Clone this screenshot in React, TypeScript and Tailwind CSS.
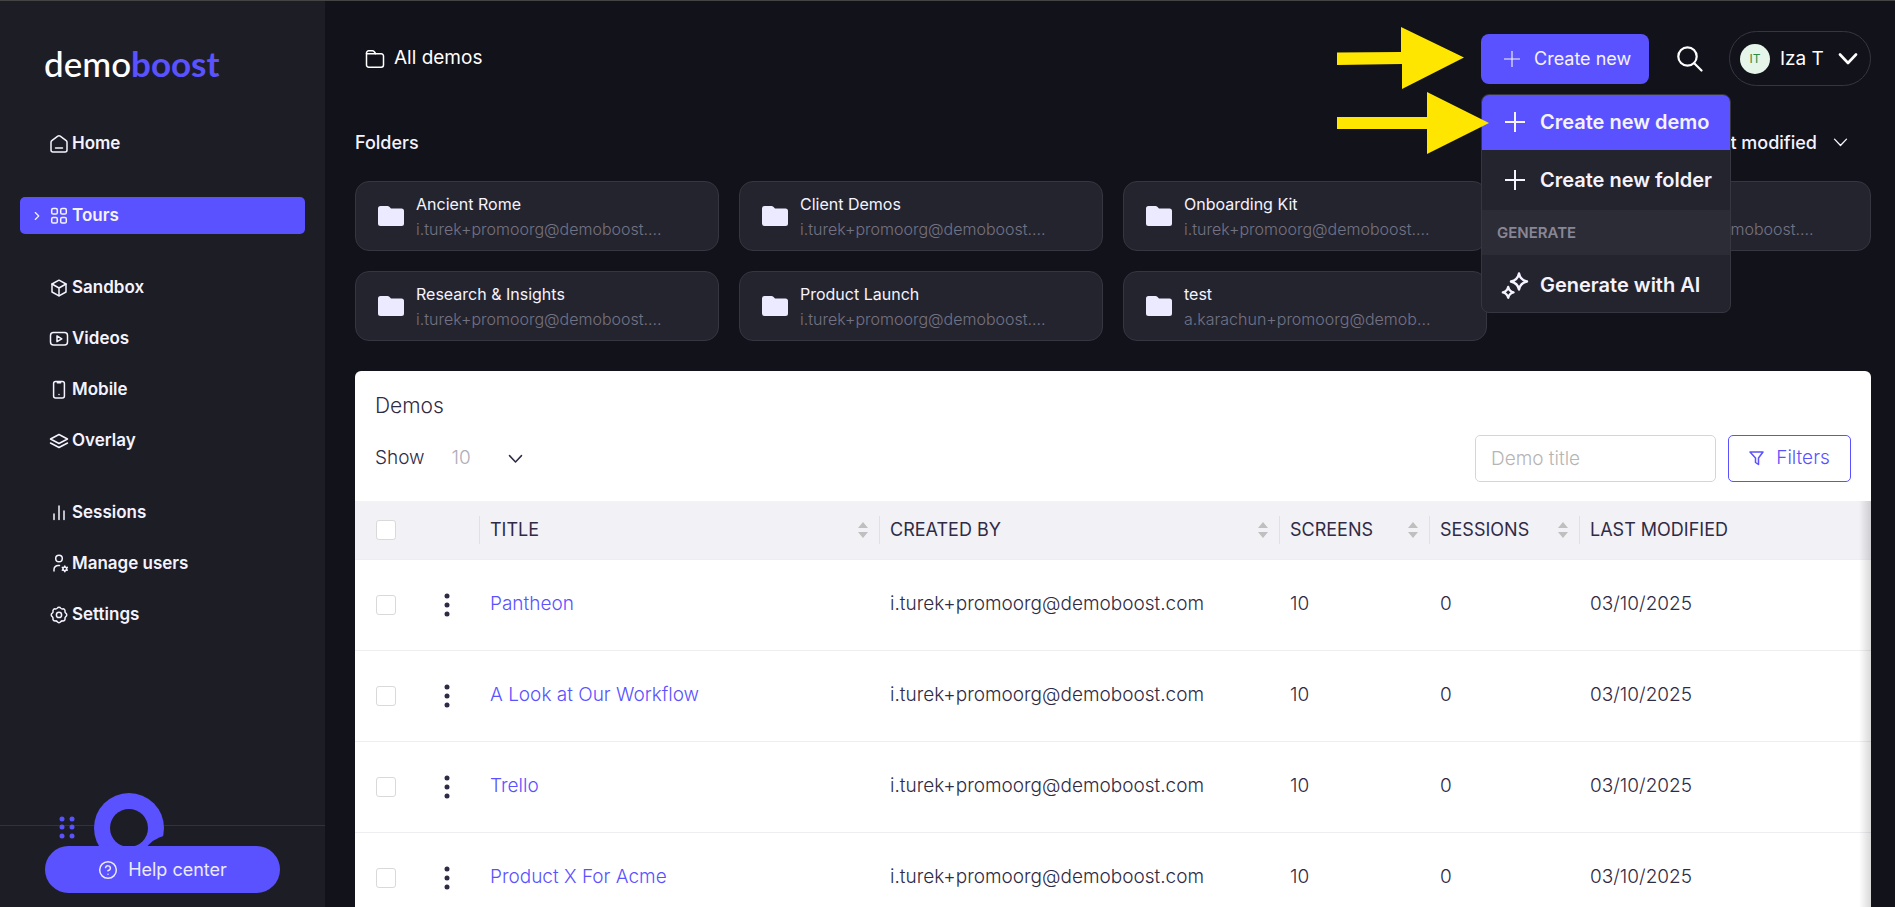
import type { ReactNode } from 'react'
import { ChevronRight, CircleHelp } from 'lucide-react'

type NavItem = {
  label: string
  icon: ReactNode
  active?: boolean
}

function Icon({ children, className = 'size-5' }: { children: ReactNode; className?: string }) {
  return (
    <svg
      viewBox="0 0 20 20"
      fill="none"
      stroke="currentColor"
      strokeWidth="1.5"
      strokeLinecap="round"
      strokeLinejoin="round"
      className={`shrink-0 ${className}`}
      aria-hidden="true"
    >
      {children}
    </svg>
  )
}

function PlusIcon({ className, strokeWidth }: { className: string; strokeWidth: number }) {
  return (
    <svg viewBox="0 0 20 20" fill="none" stroke="currentColor" strokeWidth={strokeWidth} className={`shrink-0 ${className}`} aria-hidden="true">
      <path d="M10 0v20M0 10h20" />
    </svg>
  )
}

function Chevron({ className, strokeWidth }: { className: string; strokeWidth: number }) {
  return (
    <svg
      viewBox="0 0 20 12"
      fill="none"
      stroke="currentColor"
      strokeWidth={strokeWidth}
      strokeLinecap="round"
      strokeLinejoin="round"
      className={`shrink-0 ${className}`}
      aria-hidden="true"
    >
      <path d="M2 1.5l8 8.500 8-8.500" />
    </svg>
  )
}

const navGroups: NavItem[][] = [
  [
    {
      label: 'Home',
      icon: (
        <Icon>
          <path d="M2 8.2a2 2 0 0 1 .8-1.6l6-4.5a2 2 0 0 1 2.4 0l6 4.5a2 2 0 0 1 .8 1.6V16a2 2 0 0 1-2 2H4a2 2 0 0 1-2-2z" />
          <path d="M6.5 14h7" />
        </Icon>
      ),
    },
  ],
  [
    {
      label: 'Tours',
      active: true,
      icon: (
        <Icon>
          <rect x="2.7" y="2.5" width="5.6" height="5.6" rx="1.4" />
          <rect x="11.7" y="2.5" width="5.6" height="5.6" rx="1.4" />
          <rect x="2.7" y="11.5" width="5.6" height="5.6" rx="1.4" />
          <rect x="11.7" y="11.5" width="5.6" height="5.6" rx="1.4" />
        </Icon>
      ),
    },
  ],
  [
    {
      label: 'Sandbox',
      icon: (
        <Icon>
          <path d="M10 2.2 17 6v8l-7 3.8L3 14V6z" />
          <path d="M3 6l7 4 7-4M10 10v7.8" />
        </Icon>
      ),
    },
    {
      label: 'Videos',
      icon: (
        <Icon>
          <rect x="1.5" y="3.6" width="17" height="12.4" rx="3" />
          <path d="M8 6.9v5.8l4.8-2.9z" />
        </Icon>
      ),
    },
    {
      label: 'Mobile',
      icon: (
        <Icon>
          <rect x="4.6" y="1.6" width="10.8" height="16.4" rx="2" />
          <path d="M8.3 2.8h3.4M10 14.4v.1" />
        </Icon>
      ),
    },
    {
      label: 'Overlay',
      icon: (
        <Icon>
          <path d="M10 3.5 18.5 8 10 12.5 1.5 8z" />
          <path d="M1.5 12 10 16.5l8.500-4.500" />
        </Icon>
      ),
    },
  ],
  [
    {
      label: 'Sessions',
      icon: (
        <Icon>
          <path d="M5 11v5.500M10 3v13.500M15 8v8.500" />
        </Icon>
      ),
    },
    {
      label: 'Manage users',
      icon: (
        <Icon>
          <circle cx="10" cy="4.500" r="3.300" />
          <path d="M5 17v-1.400a4.200 4.200 0 0 1 4.200-4.200h1.300" />
          <circle cx="15.800" cy="14.800" r="1.900" />
          <path d="M15.800 11.900v1M15.800 16.700v1M13.300 13.400l.8.400M17.500 15.800l.8.400M13.300 16.200l.8-.4M17.500 13.800l.8-.4" />
        </Icon>
      ),
    },
    {
      label: 'Settings',
      icon: (
        <Icon>
          <path d="M8.300 3.100a2 2 0 0 1 3.400 0 2 2 0 0 0 1.900.8 2 2 0 0 1 2.400 2.400 2 2 0 0 0 .8 1.900 2 2 0 0 1 0 3.400 2 2 0 0 0-.8 1.900 2 2 0 0 1-2.400 2.400 2 2 0 0 0-1.900.8 2 2 0 0 1-3.400 0 2 2 0 0 0-1.900-.8A2 2 0 0 1 4 13.500a2 2 0 0 0-.8-1.900 2 2 0 0 1 0-3.400A2 2 0 0 0 4 6.300a2 2 0 0 1 2.400-2.400 2 2 0 0 0 1.900-.8z" />
          <circle cx="10" cy="9.900" r="2.600" />
        </Icon>
      ),
    },
  ],
]

const folders = [
  { name: 'Ancient Rome', owner: 'i.turek+promoorg@demoboost.…' },
  { name: 'Client Demos', owner: 'i.turek+promoorg@demoboost.…' },
  { name: 'Onboarding Kit', owner: 'i.turek+promoorg@demoboost.…' },
  { name: 'Marketing', owner: 'i.turek+promoorg@demoboost.…' },
  { name: 'Research & Insights', owner: 'i.turek+promoorg@demoboost.…' },
  { name: 'Product Launch', owner: 'i.turek+promoorg@demoboost.…' },
  { name: 'test', owner: 'a.karachun+promoorg@demob…' },
]

const demos = ['Pantheon', 'A Look at Our Workflow', 'Trello', 'Product X For Acme'].map((title) => ({
  title,
  createdBy: 'i.turek+promoorg@demoboost.com',
  screens: 10,
  sessions: 0,
  modified: '03/10/2025',
}))

const columns = [
  { label: 'TITLE', sortable: true },
  { label: 'CREATED BY', sortable: true },
  { label: 'SCREENS', sortable: true },
  { label: 'SESSIONS', sortable: true },
  { label: 'LAST MODIFIED', sortable: false },
]

function Sidebar() {
  return (
    <aside className="flex w-[325px] shrink-0 flex-col bg-[#1d1d26]">
      <a href="#" className="flex h-[104px] items-center pl-[44px] pt-5 font-['Lato',sans-serif] text-[35px] leading-none text-white">
        <span className="font-medium">demo</span>
        <span className="font-bold text-[#5a52ff]">boost</span>
      </a>

      <nav className="flex flex-col gap-[35px] px-5 pt-5">
        {navGroups.map((group) => (
          <ul key={group[0].label} className="flex flex-col gap-[14px]">
            {group.map((item) => (
              <li key={item.label}>
                <a
                  href="#"
                  className={`flex h-[37px] items-center rounded-[5px] pl-[10px] text-[17px] font-semibold text-[#f4f3ff] ${
                    item.active ? 'bg-[#5a52ff]' : ''
                  }`}
                >
                  <span className="flex w-[19px] items-center">
                    {item.active && <ChevronRight className="size-[14px]" />}
                  </span>
                  {item.icon}
                  <span className="ml-[3px] pt-px">{item.label}</span>
                </a>
              </li>
            ))}
          </ul>
        ))}
      </nav>

      <div className="relative mt-auto border-t border-[#32323d] px-[45px] pb-[14px] pt-5">
        <svg viewBox="0 0 110 72" className="absolute -top-[34px] left-[58px] h-[72px] w-[110px]" aria-hidden="true">
          <g fill="#5a52ff">
            {[27, 35, 44].map((cy) => (
              <g key={cy}>
                <circle cx="4" cy={cy} r="2.500" />
                <circle cx="14" cy={cy} r="2.500" />
              </g>
            ))}
            <circle cx="71" cy="36" r="35" />
          </g>
          <circle cx="71" cy="36" r="19" fill="#1d1d26" />
          <circle cx="114" cy="76" r="33" fill="#1d1d26" />
        </svg>
        <button className="relative flex h-[47px] w-full items-center justify-center gap-[10px] rounded-full bg-[#5a52ff] text-[18px] text-[#eceaff]">
          <CircleHelp className="size-5" strokeWidth={1.800} />
          Help center
        </button>
      </div>
    </aside>
  )
}

function CreateMenu() {
  return (
    <div className="relative">
      <button className="flex h-[50px] w-[168px] items-center rounded-lg bg-[#5a52ff] pl-[23px] text-[18px] text-[#f4f3ff]">
        <PlusIcon className="mr-[14px] size-4" strokeWidth={1.400} />
        Create new
      </button>

      <div className="absolute left-0 top-[60px] z-10 w-[250px] overflow-hidden rounded-lg border border-[#363641] bg-[#24242e] text-[20px] font-semibold text-[#f4f3ff]">
        <button className="flex h-[55px] w-full items-center gap-[15px] bg-[#5a52ff] pl-[23px]">
          <PlusIcon className="size-5" strokeWidth={2} />
          Create new demo
        </button>
        <button className="flex h-[60px] w-full items-center gap-[15px] pl-[23px]">
          <PlusIcon className="size-5" strokeWidth={2} />
          Create new folder
        </button>
        <div className="flex h-[45px] items-center bg-[#2c2c36] pl-[15px] pt-0.5 text-[15px] text-[#888796]">GENERATE</div>
        <button className="flex h-[57px] w-full items-center gap-[11px] pl-[19px] pt-1">
          <svg viewBox="0 0 28 28" className="size-7" fill="none" stroke="currentColor" strokeWidth="2.400" strokeLinejoin="round" aria-hidden="true">
            <path d="M18 2.500c1 4.800 3.200 7 8 8-4.800 1-7 3.200-8 8-1-4.800-3.200-7-8-8 4.800-1 7-3.200 8-8z" />
            <path d="M7.200 16c.8 3.200 2.200 4.600 5.300 5.400-3.100.8-4.500 2.200-5.300 5.300-.8-3.100-2.200-4.500-5.300-5.300 3.100-.8 4.500-2.200 5.300-5.400z" />
          </svg>
          Generate with AI
        </button>
      </div>

      {/* tutorial arrows */}
      <svg viewBox="0 0 154 130" className="pointer-events-none absolute -left-[145px] -top-2 z-20 h-[130px] w-[154px]" fill="#ffe600" aria-hidden="true">
        <path d="M1 26.500 65 26V1l63 30.500L66 63V38L1 39z" />
        <path d="M1 91h90V66l62 31-62 31v-25H1z" />
      </svg>
    </div>
  )
}

function Header() {
  return (
    <header className="flex items-center justify-between">
      <a href="#" className="flex items-center gap-[9px] pl-[10px] text-[19px] text-white">
        <Icon>
          <path d="M1.500 16V4a2.200 2.200 0 0 1 2.200-2.200h3.600c.8 0 1.500.4 2 1l1.400 2h5.600a2.200 2.200 0 0 1 2.200 2.200v9a2.200 2.200 0 0 1-2.200 2.200H3.700A2.200 2.200 0 0 1 1.500 16z" />
          <path d="M1.500 4.800h9" />
        </Icon>
        All demos
      </a>
      <div className="flex items-center">
        <CreateMenu />
        <button aria-label="Search" className="ml-7 mr-[26px] text-white">
          <svg viewBox="0 0 26 26" className="size-[26px]" fill="none" stroke="currentColor" strokeWidth="2.200" strokeLinecap="round" aria-hidden="true">
            <circle cx="10.500" cy="10.500" r="9.200" />
            <path d="M17.200 17.200l7.300 7.300" />
          </svg>
        </button>
        <button className="flex h-[55px] w-[142px] items-center rounded-full border border-[#363641] pl-[10px] text-[19px] text-white">
          <span className="mr-[10px] flex size-[30px] shrink-0 items-center justify-center rounded-full bg-[#e6f5e9] text-[12px] text-[#2e8b45]">
            IT
          </span>
          <span className="pt-0.5 whitespace-nowrap">Iza T</span>
          <Chevron className="ml-[14px] h-3 w-5" strokeWidth={2.600} />
        </button>
      </div>
    </header>
  )
}

function Folders() {
  return (
    <section>
      <div className="flex h-14 items-center justify-between text-[18px] font-medium text-[#f4f3ff]">
        <h2>Folders</h2>
        <button className="flex items-center gap-4 pr-[23px]">
          Last modified
          <Chevron className="h-[9px] w-[15px]" strokeWidth={1.800} />
        </button>
      </div>
      <div className="mt-[11px] grid grid-cols-4 gap-5">
        {folders.map((folder) => (
          <a
            key={folder.name}
            href="#"
            className="flex h-[70px] items-center gap-3 rounded-[14px] border border-[#363641] bg-[#24242e] pl-[22px]"
          >
            <svg viewBox="0 0 26 20" className="h-5 w-[26px] shrink-0" fill="#eceaff" aria-hidden="true">
              <path d="M0 2.500A2.500 2.500 0 0 1 2.500 0h7c.7 0 1.300.3 1.800.8L13 2.500h10.500A2.500 2.500 0 0 1 26 5v12.500a2.500 2.500 0 0 1-2.500 2.500h-21A2.500 2.500 0 0 1 0 17.500z" />
            </svg>
            <span className="flex min-w-0 flex-col pt-px">
              <span className="text-[16px] leading-[25px] text-[#f4f3ff]">{folder.name}</span>
              <span className="truncate text-[16px] font-light leading-[25px] text-[#737284]">{folder.owner}</span>
            </span>
          </a>
        ))}
      </div>
    </section>
  )
}

function Checkbox({ label }: { label: string }) {
  return (
    <input
      type="checkbox"
      aria-label={label}
      className="block size-5 appearance-none rounded-[3px] border border-[#d9d9d9] bg-white checked:bg-[#5a52ff]"
    />
  )
}

function DemosTable() {
  return (
    <div className="relative">
      <table className="w-full table-fixed text-left text-[19px] font-light text-[#2f2b45]">
        <colgroup>
          <col className="w-[62px]" />
          <col className="w-[62px]" />
          <col className="w-[400px]" />
          <col className="w-[400px]" />
          <col className="w-[150px]" />
          <col className="w-[150px]" />
          <col />
        </colgroup>
        <thead>
          <tr className="h-[58px] border-b border-[#eeeef0] bg-[#f2f1f6] text-[18px]">
            <th className="pl-[21px]">
              <Checkbox label="Select all" />
            </th>
            <th aria-label="Actions" />
            {columns.map((col) => (
              <th key={col.label} className="p-0 font-normal">
                <div className="flex h-7 items-center justify-between border-l border-[#e0e0e6] pl-[10px] pr-[11px]">
                  {col.label}
                  {col.sortable && (
                    <svg viewBox="0 0 10 16" className="h-4 w-[10px]" fill="#bfbfbf" aria-hidden="true">
                      <path d="M5 0l5 6H0zM5 16l5-6H0z" />
                    </svg>
                  )}
                </div>
              </th>
            ))}
          </tr>
        </thead>
        <tbody>
          {demos.map((demo) => (
            <tr key={demo.title} className="h-[91px] border-b border-[#eeeef0]">
              <td className="pl-[21px]">
                <Checkbox label={`Select ${demo.title}`} />
              </td>
              <td>
                <button aria-label={`Actions for ${demo.title}`} className="ml-[27px] block">
                  <svg viewBox="0 0 6 24" className="h-6 w-[6px]" fill="#2f2b45" aria-hidden="true">
                    <circle cx="3" cy="3" r="2.500" />
                    <circle cx="3" cy="12" r="2.500" />
                    <circle cx="3" cy="21" r="2.500" />
                  </svg>
                </button>
              </td>
              <td className="pl-[11px]">
                <a href="#" className="text-[#5a52ff]">
                  {demo.title}
                </a>
              </td>
              <td className="pl-[11px]">{demo.createdBy}</td>
              <td className="pl-[11px]">{demo.screens}</td>
              <td className="pl-[11px]">{demo.sessions}</td>
              <td className="pl-[11px]">{demo.modified}</td>
            </tr>
          ))}
        </tbody>
      </table>
      <div className="pointer-events-none absolute inset-y-0 right-0 w-3 bg-linear-to-l from-black/15 to-transparent" />
    </div>
  )
}

function Demos() {
  return (
    <section className="mt-[30px] overflow-hidden rounded-t-md bg-white text-[19px] font-light text-[#2f2b45]">
      <h2 className="px-5 pt-5 text-[21px] leading-[30px]">Demos</h2>
      <div className="flex items-center justify-between px-5 pb-[19px] pt-[14px]">
        <label className="flex items-center">
          Show
          <span className="relative ml-[27px] flex items-center">
            <select className="w-[75px] appearance-none text-[#aeadba]">
              <option>10</option>
            </select>
            <Chevron className="pointer-events-none absolute right-1 h-[10px] w-[15px]" strokeWidth={2} />
          </span>
        </label>
        <div className="flex gap-3">
          <input
            type="text"
            placeholder="Demo title"
            aria-label="Demo title"
            className="h-[47px] w-[241px] rounded-[5px] border border-[#d5d4de] px-[15px] placeholder:text-[#b5b5b5]"
          />
          <button className="flex h-[47px] w-[123px] items-center justify-center gap-3 rounded-[5px] border border-[#5a52ff] text-[#5a52ff]">
            <svg viewBox="0 0 15 15" className="size-[15px]" fill="none" stroke="currentColor" strokeWidth="1.500" strokeLinejoin="round" aria-hidden="true">
              <path d="M1 1h13L9.500 7v6.500l-3-2V7z" />
            </svg>
            Filters
          </button>
        </div>
      </div>
      <DemosTable />
    </section>
  )
}

export default function App() {
  return (
    <div className="flex h-screen border-t border-[#444] bg-[#12121b] font-['Inter',sans-serif]">
      <Sidebar />
      <main className="min-w-0 flex-1 overflow-y-auto pl-[30px] pr-6 pt-[30px] [scrollbar-width:none]">
        <Header />
        <div className="mt-7">
          <Folders />
        </div>
        <Demos />
      </main>
    </div>
  )
}
